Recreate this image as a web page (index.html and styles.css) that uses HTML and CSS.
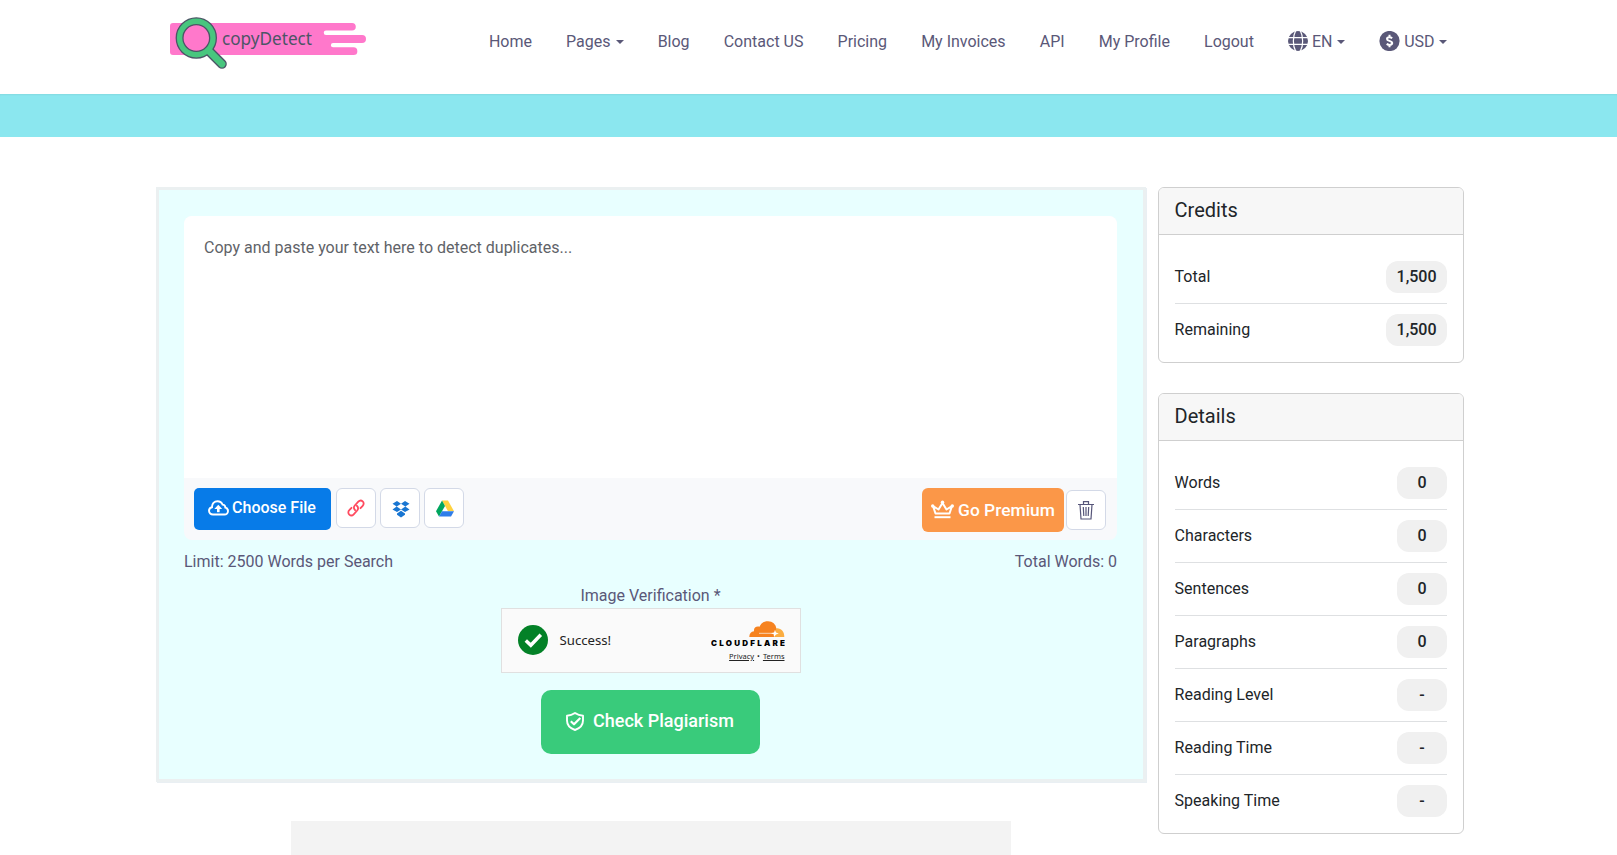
FILE: index.html
```
<!DOCTYPE html>
<html lang="en">
<head>
    <meta charset="UTF-8">
    <meta name="viewport" content="width=device-width, initial-scale=1.0">
    <title>copyDetect - Plagiarism Checker</title>
    <link rel="stylesheet" href="styles.css">
</head>
<body>
    <header class="header">
        <a class="logo" href="#">
            <svg width="198" height="54" viewBox="0 0 198 54">
                <path fill="#ff78cb" d="M3 6H182a3.8 3.8 0 0 1 0 7.600H156a2 2 0 0 0 0 4.500H192a4 4 0 0 1 0 8H163a2 2 0 0 0 0 4.200H183.500a3.800 3.800 0 0 1 0 7.700H3a3 3 0 0 1-3-3V9a3 3 0 0 1 3-3z"/>
                <path d="M39 34L52 47" stroke="#4c5566" stroke-width="9.600" stroke-linecap="round"/>
                <circle cx="26.300" cy="21" r="16.700" fill="none" stroke="#4c5566" stroke-width="8"/>
                <circle cx="26.300" cy="21" r="16.700" fill="none" stroke="#48c67e" stroke-width="5.400"/>
                <path d="M38.500 33.500L52 47" stroke="#48c67e" stroke-width="6.800" stroke-linecap="round"/>
                <text class="logo-text" x="52" y="28" textLength="90" lengthAdjust="spacingAndGlyphs">copyDetect</text>
            </svg>
        </a>
        <nav class="nav">
            <a href="#">Home</a>
            <a href="#" class="caret">Pages</a>
            <a href="#">Blog</a>
            <a href="#">Contact US</a>
            <a href="#">Pricing</a>
            <a href="#">My Invoices</a>
            <a href="#">API</a>
            <a href="#">My Profile</a>
            <a href="#">Logout</a>
            <a href="#" class="caret with-icon">
                <svg width="20" height="20" viewBox="0 0 20 20">
                    <circle cx="10" cy="10" r="10" fill="#5a5878"/>
                    <path d="M0 6.700H20M0 13.300H20" stroke="#fff" stroke-width="1.200"/>
                    <path d="M7.600 0C4.600 5 4.600 15 7.600 20M12.400 0C15.400 5 15.400 15 12.400 20" fill="none" stroke="#fff" stroke-width="1.200"/>
                </svg>
                EN
            </a>
            <a href="#" class="caret with-icon">
                <svg width="21" height="20" viewBox="0 0 21 20">
                    <circle cx="10.500" cy="10" r="10.100" fill="#5a5878"/>
                    <path d="M13.200 7.200C12.300 6.500 11.400 6.200 10.400 6.200C8.900 6.200 8 6.900 8 7.900C8 10.200 13.200 9.500 13.200 12.100C13.200 13.200 12.200 13.900 10.600 13.900C9.500 13.900 8.500 13.500 7.700 12.900M10.500 3.800V6M10.500 14V16.200" fill="none" stroke="#fff" stroke-width="2"/>
                </svg>
                USD
            </a>
        </nav>
    </header>
    <div class="banner"></div>

    <div class="container">
        <main class="content">
            <section class="tool-box">
                <div class="editor">
                    <textarea class="editor-input" placeholder="Copy and paste your text here to detect duplicates..."></textarea>
                    <div class="toolbar">
                        <div class="toolbar-left">
                            <button class="btn btn-file">
                                <svg width="21" height="16" viewBox="0 0 21 16" fill="none" stroke="#fff" stroke-width="1.900">
                                    <path d="M5 14.500C2.700 14.500 1 12.900 1 10.800C1 9 2.200 7.600 4 7.200C3.800 3.700 6.300 1.200 9.500 1.200C12 1.200 13.800 2.600 14.600 4.600C16.400 4.700 17.400 6 17.300 7.500C19 7.900 20 9.300 20 11C20 13 18.500 14.500 16.500 14.500Z"/>
                                    <path d="M10.300 12.200V8" stroke-width="2.600"/>
                                    <path d="M6.300 9L10.300 4.800L14.200 9Z" fill="#fff" stroke="none"/>
                                </svg>
                                Choose File
                            </button>
                            <button class="btn-icon">
                                <svg width="18" height="18" viewBox="0 0 18 18" fill="none" stroke="#ff4a5f" stroke-width="1.800" stroke-linecap="round">
                                    <path d="M8.200 11.200C6.600 9.900 6.500 8 7.800 6.500L11.300 2.700C12.600 1.300 14.500 1.300 15.700 2.400C17 3.600 17 5.500 15.700 6.800L13.500 9.200"/>
                                    <path d="M9.800 6.800C11.400 8.100 11.500 10 10.200 11.500L6.700 15.300C5.400 16.700 3.500 16.700 2.300 15.600C1 14.400 1 12.500 2.300 11.200L4.500 8.800"/>
                                </svg>
                            </button>
                            <button class="btn-icon icon-low">
                                <svg width="18" height="18" viewBox="0 0 18 18" fill="#1976d2">
                                    <path d="M5 1L9 3.700L4.700 6.500L.5 3.700ZM13 1L17.500 3.700L13.300 6.500L9 3.700ZM.5 9.400L4.700 6.500L9 9.400L5 12ZM17.500 9.400L13.300 6.500L9 9.400L13 12ZM9 10.700L13 13.600V14.800L9 17.500L5 14.800V13.600Z"/>
                                </svg>
                            </button>
                            <button class="btn-icon icon-low">
                                <svg width="18" height="17" viewBox="0 0 18 17">
                                    <path fill="#ffd23f" d="M6 .5H12L18 11.200H12Z"/>
                                    <path fill="#00a65e" d="M6 .5L9 6L3 16.500L0 11.200Z"/>
                                    <path fill="#2f7de9" d="M6 11.200H18L15 16.500H3Z"/>
                                </svg>
                            </button>
                        </div>
                        <div class="toolbar-right">
                            <button class="btn btn-premium">
                                <svg width="23" height="19" viewBox="0 0 23 19" fill="none" stroke="#fff" stroke-width="2" stroke-linejoin="round">
                                    <path d="M4.500 13.500L2 6L7.500 9.500L11.500 3L15.500 9.500L21 6L18.500 13.500Z"/>
                                    <path d="M3.500 17.200H19.500"/>
                                    <circle cx="11.500" cy="2.200" r="1.700" fill="#fff" stroke="none"/>
                                    <circle cx="1.700" cy="6" r="1.700" fill="#fff" stroke="none"/>
                                    <circle cx="21.300" cy="6" r="1.700" fill="#fff" stroke="none"/>
                                </svg>
                                Go Premium
                            </button>
                            <button class="btn-icon">
                                <svg width="16" height="20" viewBox="0 0 16 20" fill="none" stroke="#57567a" stroke-width="1.200">
                                    <path d="M0 4.500H16M5.500 4V1.600H10.500V4M2 4.500L3 19H13L14 4.500M5.300 7L5.800 16M8 7V16M10.700 7L10.200 16"/>
                                </svg>
                            </button>
                        </div>
                    </div>
                </div>

                <div class="limits">
                    <span>Limit: 2500 Words per Search</span>
                    <span>Total Words: 0</span>
                </div>

                <div class="verify">
                    <label class="verify-label">Image Verification *</label>
                    <div class="captcha">
                        <svg width="30" height="30" viewBox="0 0 30 30">
                            <circle cx="15" cy="15" r="15" fill="#038127"/>
                            <path d="M7.800 15.500L12.800 20.200L22.800 9.800" fill="none" stroke="#fff" stroke-width="3.500"/>
                        </svg>
                        <span class="captcha-status">Success!</span>
                        <div class="captcha-brand">
                            <svg width="74" height="26" viewBox="0 0 74 26">
                                <path fill="#fbad41" d="M61 16C62 12 62.500 7.200 66 7.200C70.500 7.200 73.500 11 73.300 16Z"/>
                                <path fill="#f6821f" d="M38.300 16C38.300 12.500 40 10.500 43 10.200C42.500 7 45 4.800 48.500 5.700C50 2 53 .2 57 .2C61.500 .2 65 3.400 65.300 7.300L63 16Z"/>
                                <path d="M48 12.300H63.500" stroke="#fff" stroke-width="1" opacity=".65"/>
                                <path fill="#fff" d="M64 8.800L65 11.500L67.800 12.500L65 13.500L63 16L62.700 13.300L60 12.300L63 11.500Z"/>
                                <text class="cf-name" x="0" y="25.200" textLength="74">CLOUDFLARE</text>
                            </svg>
                            <div class="captcha-links"><a href="#">Privacy</a><span>•</span><a href="#">Terms</a></div>
                        </div>
                    </div>
                    <button class="btn btn-check">
                        <svg width="18" height="19" viewBox="0 0 18 19" fill="none" stroke="#fff" stroke-width="1.900" stroke-linejoin="round">
                            <path d="M9 1C11.500 2.700 14 3.500 17 3.700V8.500C17 13 14 16.300 9 18C4 16.300 1 13 1 8.500V3.700C4 3.500 6.500 2.700 9 1Z"/>
                            <path d="M4.800 9.300L8 12.300L14.300 6" stroke-width="2.200"/>
                        </svg>
                        <span>Check Plagiarism</span>
                    </button>
                </div>
            </section>
            <div class="ad-slot"></div>
        </main>

        <aside class="sidebar">
            <div class="card">
                <div class="card-header">Credits</div>
                <ul class="card-list">
                    <li>Total <span class="badge">1,500</span></li>
                    <li>Remaining <span class="badge">1,500</span></li>
                </ul>
            </div>
            <div class="card">
                <div class="card-header">Details</div>
                <ul class="card-list">
                    <li>Words <span class="badge">0</span></li>
                    <li>Characters <span class="badge">0</span></li>
                    <li>Sentences <span class="badge">0</span></li>
                    <li>Paragraphs <span class="badge">0</span></li>
                    <li>Reading Level <span class="badge">-</span></li>
                    <li>Reading Time <span class="badge">-</span></li>
                    <li>Speaking Time <span class="badge">-</span></li>
                </ul>
            </div>
        </aside>
    </div>
</body>
</html>
```

FILE: styles.css
```
* {
    margin: 0;
    padding: 0;
    box-sizing: border-box;
}

body {
    font-family: Roboto, sans-serif;
    font-size: 16px;
    line-height: 24px;
    color: #212529;
    background: #fff;
    height: 855px;
    overflow: hidden;
}

svg {
    flex-shrink: 0;
}

a {
    color: inherit;
    text-decoration: none;
}

/* Header */
.header {
    display: flex;
    justify-content: space-between;
    align-items: flex-start;
    height: 94px;
    padding: 17px 170px 0;
}

.logo svg {
    display: block;
}

.logo-text {
    font-family: "Noto Sans", sans-serif;
    font-size: 18.5px;
    fill: #4c5566;
}

.nav {
    display: flex;
    gap: 34.1px;
    padding-top: 13px;
    color: #5a5878;
}

.nav a {
    display: flex;
    align-items: center;
    white-space: nowrap;
}

.nav .caret::after {
    content: "";
    margin-left: 5px;
    border-top: 4px solid;
    border-left: 4px solid transparent;
    border-right: 4px solid transparent;
}

.nav .with-icon svg {
    margin: -3px 4px 0 0;
}

.nav .with-icon::after {
    margin-left: 4.5px;
}

.banner {
    height: 43px;
    background: #8be7ef;
    box-shadow: inset 0 2px 2px -1px rgba(0, 0, 0, 0.06);
}

/* Layout */
.container {
    display: flex;
    gap: 12px;
    width: 1308px;
    margin: 50px 0 0 156px;
}

.content {
    width: 990px;
}

.tool-box {
    height: 595px;
    padding: 25.6px 26px 26px 25px;
    background: #e8ffff;
    border: 3px solid #ebf0f1;
    box-shadow: 1px 1px 0 #e9eff3;
}

/* Editor */
.editor {
    height: 324.4px;
    border-radius: 8px;
    background: #f8f9fb;
    overflow: hidden;
}

.editor-input {
    display: block;
    width: 100%;
    height: 262.4px;
    padding: 20px;
    border: none;
    outline: none;
    resize: none;
    background: #fff;
    font: inherit;
}

.editor-input::placeholder {
    color: #5f6368;
}

.toolbar {
    display: flex;
    justify-content: space-between;
    padding: 10px 11px 0 10px;
}

.toolbar-left {
    display: flex;
    align-items: flex-start;
    gap: 4px;
}

.toolbar-right {
    display: flex;
    align-items: center;
    gap: 2px;
}

.btn {
    display: flex;
    align-items: center;
    justify-content: center;
    border: none;
    color: #fff;
    font-family: inherit;
    font-weight: 500;
    white-space: nowrap;
}

.btn-file {
    width: 137px;
    height: 42px;
    margin-right: 1px;
    padding: 0 1px 2px 0;
    gap: 3px;
    border-radius: 5px;
    background: #077be8;
    font-size: 16px;
}

.btn-icon {
    display: flex;
    align-items: center;
    justify-content: center;
    width: 40px;
    height: 40px;
    border: 1px solid #d3d9e7;
    border-radius: 6px;
    background: #fff;
}

.icon-low {
    padding: 2px 0 0 1px;
}

.btn-premium {
    width: 142px;
    height: 44px;
    gap: 4px;
    border-radius: 6px;
    background: #fb9748;
    font-size: 17.4px;
}

.limits {
    display: flex;
    justify-content: space-between;
    margin-top: 10px;
    color: #5a5878;
}

/* Verification */
.verify {
    display: flex;
    flex-direction: column;
    align-items: center;
    margin-top: 10px;
}

.verify-label {
    color: #5a5878;
}

.captcha {
    display: flex;
    align-items: center;
    width: 300px;
    height: 65px;
    padding: 0 15px 0 16px;
    border: 1px solid #e0e0e0;
    background: #fafafa;
}

.captcha-status {
    margin-left: 12px;
    font-family: "Noto Sans", sans-serif;
    font-size: 13.2px;
    color: #232323;
}

.captcha-brand {
    margin-left: auto;
    padding-top: 1px;
}

.captcha-brand svg {
    display: block;
}

.cf-name {
    font-family: Inter, sans-serif;
    font-size: 8px;
    font-weight: 900;
    fill: #000;
}

.captcha-links {
    display: flex;
    justify-content: flex-end;
    gap: 3px;
    margin-top: 4px;
    font-family: "Noto Sans", sans-serif;
    font-size: 7.5px;
    line-height: 10px;
    color: #232323;
}

.captcha-links a {
    text-decoration: underline;
}

.btn-check {
    width: 219px;
    height: 64px;
    margin: 17px 1px 0 0;
    gap: 9px;
    border-radius: 10px;
    background: #39cb7b;
    font-size: 18px;
}

.btn-check span {
    padding-bottom: 3px;
}

.ad-slot {
    width: 720px;
    height: 90px;
    margin: 39px auto 0;
    background: #f3f3f3;
}

/* Sidebar */
.sidebar {
    width: 306px;
}

.card {
    margin-bottom: 30px;
    border: 1px solid #cfcfcf;
    border-radius: 6px;
    background: #fff;
    overflow: hidden;
}

.card-header {
    height: 47px;
    padding: 0 15.6px;
    border-bottom: 1px solid #cfcfcf;
    background: #f7f7f7;
    font-size: 20px;
    line-height: 45px;
}

.card-list {
    padding: 16px 16px 16px 15.6px;
    list-style: none;
}

.card-list li {
    display: flex;
    justify-content: space-between;
    align-items: center;
    height: 53px;
    border-bottom: 1px solid #dee0e2;
}

.card-list li:last-child {
    height: 42px;
    padding-top: 10px;
    border-bottom: none;
}

.badge {
    min-width: 50px;
    padding: 0 10.5px;
    border-radius: 12px;
    background: #f0f0f0;
    font-weight: 500;
    line-height: 32px;
    text-align: center;
}
```
